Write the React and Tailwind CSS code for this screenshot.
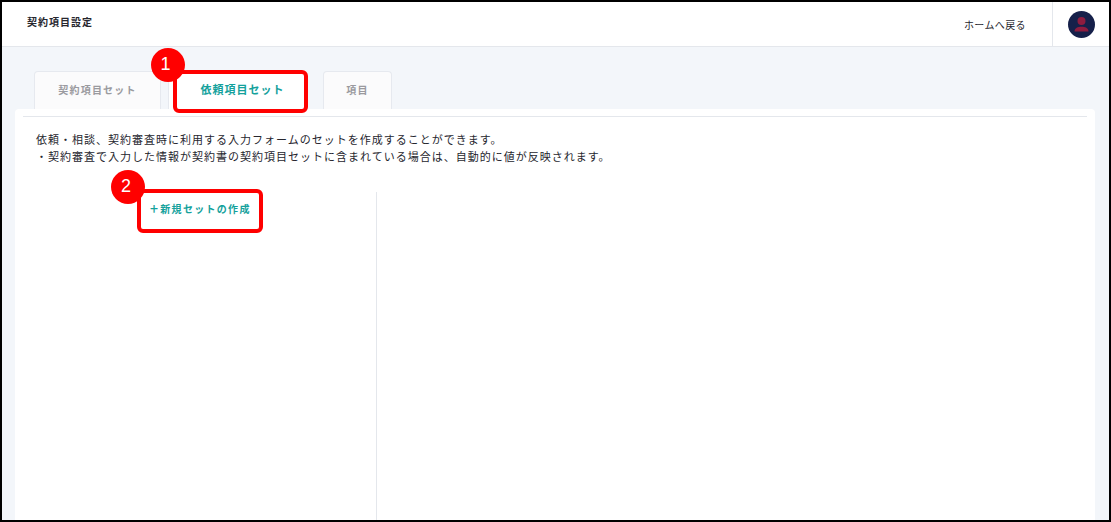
const fontStack = { fontFamily: '"Noto Sans CJK JP", "Noto Sans", sans-serif' };
const digitFont = { fontFamily: '"Liberation Sans", sans-serif' };

function Tab({ label, active, className }) {
  return (
    <div className={`h-[38px] flex items-center justify-center rounded-t border border-b-0 border-[#e6e9ef] pb-[2px] font-bold ${active ? 'bg-white text-[11px] tracking-[1px] pl-[10px] text-[#14a19c]' : 'bg-[#fbfbfc] text-[10px] tracking-[1.2px] text-[#9a9a9f]'} ${className}`}>
      {label}
    </div>
  );
}

export default function App() {
  return (
    <div className="relative w-[1111px] h-[522px] overflow-hidden border-2 border-black bg-[#f3f6fa] text-[#26262e]" style={fontStack}>
      {/* header */}
      <header className="h-[45px] flex items-center bg-white border-b border-[#e4e7ec]">
        <h1 className="pl-[25px] -mt-[5px] text-[10px] font-bold tracking-[1px]">契約項目設定</h1>
        <a className="ml-auto pr-[26px] text-[10px] tracking-[0.4px]">ホームへ戻る</a>
        <div className="h-full w-[58px] mr-[-1px] flex items-center justify-center border-l border-[#e4e7ec]">
          <div className="w-[27px] h-[27px] rounded-full bg-[#16204a] flex items-center justify-center overflow-hidden">
            <svg viewBox="0 0 27 27" className="w-[27px] h-[27px]">
              <circle cx="13.5" cy="10" r="4" fill="#8e1c3f" />
              <path d="M6.5 20.5c0-3.4 3.4-4.8 7-4.8s7 1.4 7 4.8z" fill="#8e1c3f" />
            </svg>
          </div>
        </div>
      </header>

      {/* tabs */}
      <div className="flex pl-[32px] pt-[24px]">
        <Tab label="契約項目セット" className="w-[127px]" />
        <Tab label="依頼項目セット" active className="w-[139px] ml-[7px]" />
        <Tab label="項目" className="w-[69px] ml-[16px]" />
      </div>

      {/* panel */}
      <main className="ml-[13px] w-[1080px] h-[420px] bg-white rounded-t px-[8px] pt-[7px]">
        <div className="border-t border-[#e4e7ec] pt-[14px] pl-[13px] text-[11px] leading-[17px] tracking-[1px]">
          <p>依頼・相談、契約審査時に利用する入力フォームのセットを作成することができます。</p>
          <p>・契約審査で入力した情報が契約書の契約項目セットに含まれている場合は、自動的に値が反映されます。</p>
        </div>
        <div className="flex mt-[27px] h-full">
          <div className="w-[354px] flex-none border-r border-[#e4e7ec] pt-[2px] pl-[126px]">
            <button className="text-[10px] font-bold tracking-[1.3px] text-[#14a19c]"><span className="font-black">＋</span>新規セットの作成</button>
          </div>
        </div>
      </main>

      {/* annotations */}
      <div className="absolute left-[171px] top-[68px] w-[135px] h-[43px] rounded-[6px] border-[4px] border-[#ff0000]" />
      <div className="absolute left-[149px] top-[46px] w-[34px] h-[34px] rounded-full bg-[#ff0000] flex items-center justify-center pr-[5px] pb-[2px] text-white text-[18px]" style={digitFont}>1</div>
      <div className="absolute left-[135px] top-[187px] w-[126px] h-[44px] rounded-[6px] border-[4px] border-[#ff0000]" />
      <div className="absolute left-[109px] top-[168px] w-[34px] h-[34px] rounded-full bg-[#ff0000] flex items-center justify-center pr-[4px] pb-[2px] text-white text-[18px]" style={digitFont}>2</div>
    </div>
  );
}
